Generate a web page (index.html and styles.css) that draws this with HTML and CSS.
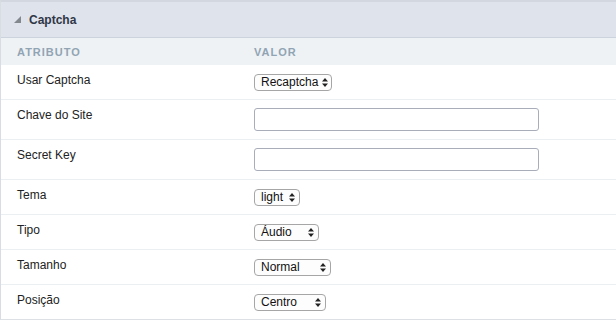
FILE: index.html
```html
<!DOCTYPE html>
<html lang="pt">
  <head>
    <meta charset="UTF-8" />
    <title>Captcha</title>
    <link rel="stylesheet" href="styles.css">
  </head>
  <body>
    <div class="panel">
      <div class="panel-title"><span class="toggle"></span>Captcha</div>

      <table class="attrs">
        <thead>
          <tr>
            <th class="col-attr">Atributo</th>
            <th>Valor</th>
          </tr>
        </thead>
        <tbody>
          <tr>
            <td>Usar Captcha</td>
            <td>
              <span class="pick w-recaptcha">
                <select><option>Recaptcha</option></select>
                <svg class="arrows" width="6" height="9" viewBox="0 0 6 9"><path d="M3 0L6 3.5H0Z M3 9L6 5.5H0Z" fill="#222"/></svg>
              </span>
            </td>
          </tr>
          <tr>
            <td>Chave do Site</td>
            <td><input type="text" class="field" /></td>
          </tr>
          <tr>
            <td>Secret Key</td>
            <td><input type="text" class="field" /></td>
          </tr>
          <tr>
            <td>Tema</td>
            <td>
              <span class="pick w-light">
                <select><option>light</option></select>
                <svg class="arrows" width="6" height="9" viewBox="0 0 6 9"><path d="M3 0L6 3.5H0Z M3 9L6 5.5H0Z" fill="#222"/></svg>
              </span>
            </td>
          </tr>
          <tr>
            <td>Tipo</td>
            <td>
              <span class="pick w-audio">
                <select><option>Áudio</option></select>
                <svg class="arrows" width="6" height="9" viewBox="0 0 6 9"><path d="M3 0L6 3.5H0Z M3 9L6 5.5H0Z" fill="#222"/></svg>
              </span>
            </td>
          </tr>
          <tr>
            <td>Tamanho</td>
            <td>
              <span class="pick w-normal">
                <select><option>Normal</option></select>
                <svg class="arrows" width="6" height="9" viewBox="0 0 6 9"><path d="M3 0L6 3.5H0Z M3 9L6 5.5H0Z" fill="#222"/></svg>
              </span>
            </td>
          </tr>
          <tr>
            <td>Posição</td>
            <td>
              <span class="pick w-centro">
                <select><option>Centro</option></select>
                <svg class="arrows" width="6" height="9" viewBox="0 0 6 9"><path d="M3 0L6 3.5H0Z M3 9L6 5.5H0Z" fill="#222"/></svg>
              </span>
            </td>
          </tr>
        </tbody>
      </table>
    </div>
  </body>
</html>
```

FILE: styles.css
```css
body {
  margin: 0;
  padding: 0;
  background: #ffffff;
  font-family: "Liberation Sans", Arial, sans-serif;
  color: #333;
}

.panel {
  width: 640px;
  border-top: 2px solid #d3d8e0;
  border-left: 1px solid #d9dde3;
  border-bottom: 1px solid #dde1e6;
}

.panel-title {
  display: flex;
  align-items: center;
  height: 35px;
  padding-left: 13px;
  background-color: #dfe3eb;
  border-bottom: 1px solid #cdd3dc;
  font-size: 12px;
  font-weight: bold;
  color: #2f3747;
}

.toggle {
  width: 0;
  height: 0;
  margin-right: 8px;
  border-left: 7px solid transparent;
  border-bottom: 7px solid #83888f;
}

.attrs {
  width: 100%;
  border-collapse: collapse;
}

.attrs th {
  height: 27px;
  padding: 0 17px;
  background-color: #eef2f5;
  text-align: left;
  font-size: 11px;
  font-weight: bold;
  letter-spacing: 1px;
  text-transform: uppercase;
  color: #91a4b3;
}

.attrs .col-attr {
  width: 203px;
  padding-left: 16px;
}

.attrs td {
  padding: 8px 17px 8px;
  vertical-align: top;
  font-size: 12px;
  line-height: 15px;
  color: #222;
  border-bottom: 1px solid #eceff2;
}

.attrs td:first-child {
  padding-left: 16px;
}

.attrs tr:last-child td {
  border-bottom: none;
}

.field {
  display: block;
  box-sizing: border-box;
  width: 285px;
  height: 23px;
  margin: 0;
  border: 1px solid #a8adb9;
  border-radius: 3px;
  background: #fff;
}

.pick {
  position: relative;
  display: block;
  margin-top: 1px;
  height: 17px;
}

.pick select {
  -webkit-appearance: none;
  appearance: none;
  box-sizing: border-box;
  height: 17px;
  margin: 0;
  padding: 0 0 0 6px;
  border: 1px solid #a6a6a6;
  border-radius: 4px;
  background: #fdfdfd;
  font-family: "Liberation Sans", Arial, sans-serif;
  font-size: 12px;
  line-height: 15px;
  color: #111;
}

.arrows {
  position: absolute;
  top: 4px;
}

.w-recaptcha select { width: 78px; }
.w-recaptcha .arrows { left: 68px; }
.w-light select { width: 46px; }
.w-light .arrows { left: 35px; }
.w-audio select { width: 65px; }
.w-audio .arrows { left: 54px; }
.w-normal select { width: 77px; }
.w-normal .arrows { left: 66px; }
.w-centro select { width: 72px; }
.w-centro .arrows { left: 61px; }
```
